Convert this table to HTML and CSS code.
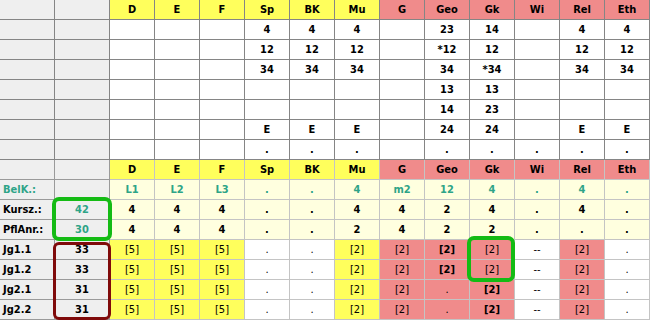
FILE: index.html
```html
<!DOCTYPE html>
<html>
<head>
<meta charset="utf-8">
<link rel="stylesheet" href="styles.css">
</head>
<body>
<div class="sheet">
  <div class="c g"></div><div class="c g"></div>
  <div class="c y">D</div><div class="c y">E</div><div class="c y">F</div><div class="c y">Sp</div><div class="c y">BK</div><div class="c y">Mu</div>
  <div class="c r">G</div><div class="c r">Geo</div><div class="c r">Gk</div><div class="c r">Wi</div><div class="c r">Rel</div><div class="c r">Eth</div>

  <div class="c g"></div><div class="c g"></div>
  <div class="c"></div><div class="c"></div><div class="c"></div><div class="c">4</div><div class="c">4</div><div class="c">4</div>
  <div class="c"></div><div class="c">23</div><div class="c">14</div><div class="c"></div><div class="c">4</div><div class="c">4</div>

  <div class="c g"></div><div class="c g"></div>
  <div class="c"></div><div class="c"></div><div class="c"></div><div class="c">12</div><div class="c">12</div><div class="c">12</div>
  <div class="c"></div><div class="c">*12</div><div class="c">12</div><div class="c"></div><div class="c">12</div><div class="c">12</div>

  <div class="c g"></div><div class="c g"></div>
  <div class="c"></div><div class="c"></div><div class="c"></div><div class="c">34</div><div class="c">34</div><div class="c">34</div>
  <div class="c"></div><div class="c">34</div><div class="c">*34</div><div class="c"></div><div class="c">34</div><div class="c">34</div>

  <div class="c g"></div><div class="c g"></div>
  <div class="c"></div><div class="c"></div><div class="c"></div><div class="c"></div><div class="c"></div><div class="c"></div>
  <div class="c"></div><div class="c">13</div><div class="c">13</div><div class="c"></div><div class="c"></div><div class="c"></div>

  <div class="c g"></div><div class="c g"></div>
  <div class="c"></div><div class="c"></div><div class="c"></div><div class="c"></div><div class="c"></div><div class="c"></div>
  <div class="c"></div><div class="c">14</div><div class="c">23</div><div class="c"></div><div class="c"></div><div class="c"></div>

  <div class="c g"></div><div class="c g"></div>
  <div class="c"></div><div class="c"></div><div class="c"></div><div class="c">E</div><div class="c">E</div><div class="c">E</div>
  <div class="c"></div><div class="c">24</div><div class="c">24</div><div class="c"></div><div class="c">E</div><div class="c">E</div>

  <div class="c g"></div><div class="c g"></div>
  <div class="c"></div><div class="c"></div><div class="c"></div><div class="c">.</div><div class="c">.</div><div class="c">.</div>
  <div class="c"></div><div class="c">.</div><div class="c">.</div><div class="c">.</div><div class="c">.</div><div class="c">.</div>

  <div class="c g lo-g"></div><div class="c g lo-g"></div>
  <div class="c y lo">D</div><div class="c y lo">E</div><div class="c y lo">F</div><div class="c y lo">Sp</div><div class="c y lo">BK</div><div class="c y lo">Mu</div>
  <div class="c r lo">G</div><div class="c r lo">Geo</div><div class="c r lo">Gk</div><div class="c r lo">Wi</div><div class="c r lo">Rel</div><div class="c r lo">Eth</div>

  <div class="c g lo-g lbl t">BelK.:</div><div class="c g lo-g"></div>
  <div class="c ly lo t">L1</div><div class="c ly lo t">L2</div><div class="c ly lo t">L3</div><div class="c ly lo t">.</div><div class="c ly lo t">.</div><div class="c ly lo t">4</div>
  <div class="c ly lo t">m2</div><div class="c ly lo t">12</div><div class="c ly lo t">4</div><div class="c ly lo t">.</div><div class="c ly lo t">4</div><div class="c ly lo t">.</div>

  <div class="c g lo-g lbl">Kursz.:</div><div class="c g lo-g t">42</div>
  <div class="c ly lo">4</div><div class="c ly lo">4</div><div class="c ly lo">4</div><div class="c ly lo">.</div><div class="c ly lo">.</div><div class="c ly lo">4</div>
  <div class="c ly lo">4</div><div class="c ly lo">2</div><div class="c ly lo">4</div><div class="c ly lo">.</div><div class="c ly lo">4</div><div class="c ly lo">.</div>

  <div class="c g lo-g lbl">PflAnr.:</div><div class="c g lo-g t">30</div>
  <div class="c ly lo">4</div><div class="c ly lo">4</div><div class="c ly lo">4</div><div class="c ly lo">.</div><div class="c ly lo">.</div><div class="c ly lo">2</div>
  <div class="c ly lo">4</div><div class="c ly lo">2</div><div class="c ly lo">2</div><div class="c ly lo">.</div><div class="c ly lo">.</div><div class="c ly lo">.</div>

  <div class="c g lo-g lbl">Jg1.1</div><div class="c g lo-g">33</div>
  <div class="c y lo n">[5]</div><div class="c y lo n">[5]</div><div class="c y lo n">[5]</div><div class="c lo n">.</div><div class="c lo n">.</div><div class="c y lo n">[2]</div>
  <div class="c r lo n">[2]</div><div class="c r lo">[2]</div><div class="c r lo n">[2]</div><div class="c lo n">--</div><div class="c r lo n">[2]</div><div class="c lo n">.</div>

  <div class="c g lo-g lbl">Jg1.2</div><div class="c g lo-g">33</div>
  <div class="c y lo n">[5]</div><div class="c y lo n">[5]</div><div class="c y lo n">[5]</div><div class="c lo n">.</div><div class="c lo n">.</div><div class="c y lo n">[2]</div>
  <div class="c r lo n">[2]</div><div class="c r lo">[2]</div><div class="c r lo n">[2]</div><div class="c lo n">--</div><div class="c r lo n">[2]</div><div class="c lo n">.</div>

  <div class="c g lo-g lbl">Jg2.1</div><div class="c g lo-g">31</div>
  <div class="c y lo n">[5]</div><div class="c y lo n">[5]</div><div class="c y lo n">[5]</div><div class="c lo n">.</div><div class="c lo n">.</div><div class="c y lo n">[2]</div>
  <div class="c r lo n">[2]</div><div class="c r lo n">.</div><div class="c r lo">[2]</div><div class="c lo n">--</div><div class="c r lo n">[2]</div><div class="c lo n">.</div>

  <div class="c g lo-g lbl">Jg2.2</div><div class="c g lo-g">31</div>
  <div class="c y lo n">[5]</div><div class="c y lo n">[5]</div><div class="c y lo n">[5]</div><div class="c lo n">.</div><div class="c lo n">.</div><div class="c y lo n">[2]</div>
  <div class="c r lo n">[2]</div><div class="c r lo n">.</div><div class="c r lo">[2]</div><div class="c lo n">--</div><div class="c r lo n">[2]</div><div class="c lo n">.</div>

  <div class="mark mark-green mark-sum"></div>
  <div class="mark mark-maroon"></div>
  <div class="mark mark-green mark-gk"></div>
</div>
</body>
</html>
```

FILE: styles.css
```css
html, body {
  margin: 0;
  padding: 0;
  background: #ffffff;
}

.sheet {
  position: relative;
  display: grid;
  grid-template-columns: 55px 55px repeat(12, 45px);
  grid-auto-rows: 20px;
  width: 650px;
  height: 320px;
  overflow: hidden;
  font-family: "DejaVu Sans Condensed", "DejaVu Sans", Tahoma, sans-serif;
  font-size: 11px;
  font-weight: bold;
  color: #000000;
}

.c {
  box-sizing: border-box;
  border-right: 1px solid #858585;
  border-bottom: 1px solid #858585;
  line-height: 19px;
  text-align: center;
  white-space: nowrap;
  background: #ffffff;
}

.g { background: #efefef; }
.y { background: #ffff5c; }
.r { background: #f08b8b; }
.ly { background: #ffffdf; }

.lo {
  border-right-color: #c4c4c4;
  border-bottom-color: #c4c4c4;
}

.lo-g {
  border-right-color: #9a9a9a;
  border-bottom-color: #9a9a9a;
}

.lbl {
  text-align: left;
  padding-left: 3px;
}

.t { color: #2ea487; }
.n { font-weight: normal; }

.mark {
  position: absolute;
  box-sizing: border-box;
  pointer-events: none;
}

.mark-green {
  border: 4px solid #14bb14;
  border-radius: 7px;
}

.mark-sum {
  left: 52px;
  top: 197px;
  width: 60px;
  height: 44px;
}

.mark-gk {
  left: 467px;
  top: 236px;
  width: 48px;
  height: 46px;
}

.mark-maroon {
  left: 53px;
  top: 242px;
  width: 58px;
  height: 78px;
  border: 3px solid #7f0a0a;
  border-radius: 6px;
}
```
